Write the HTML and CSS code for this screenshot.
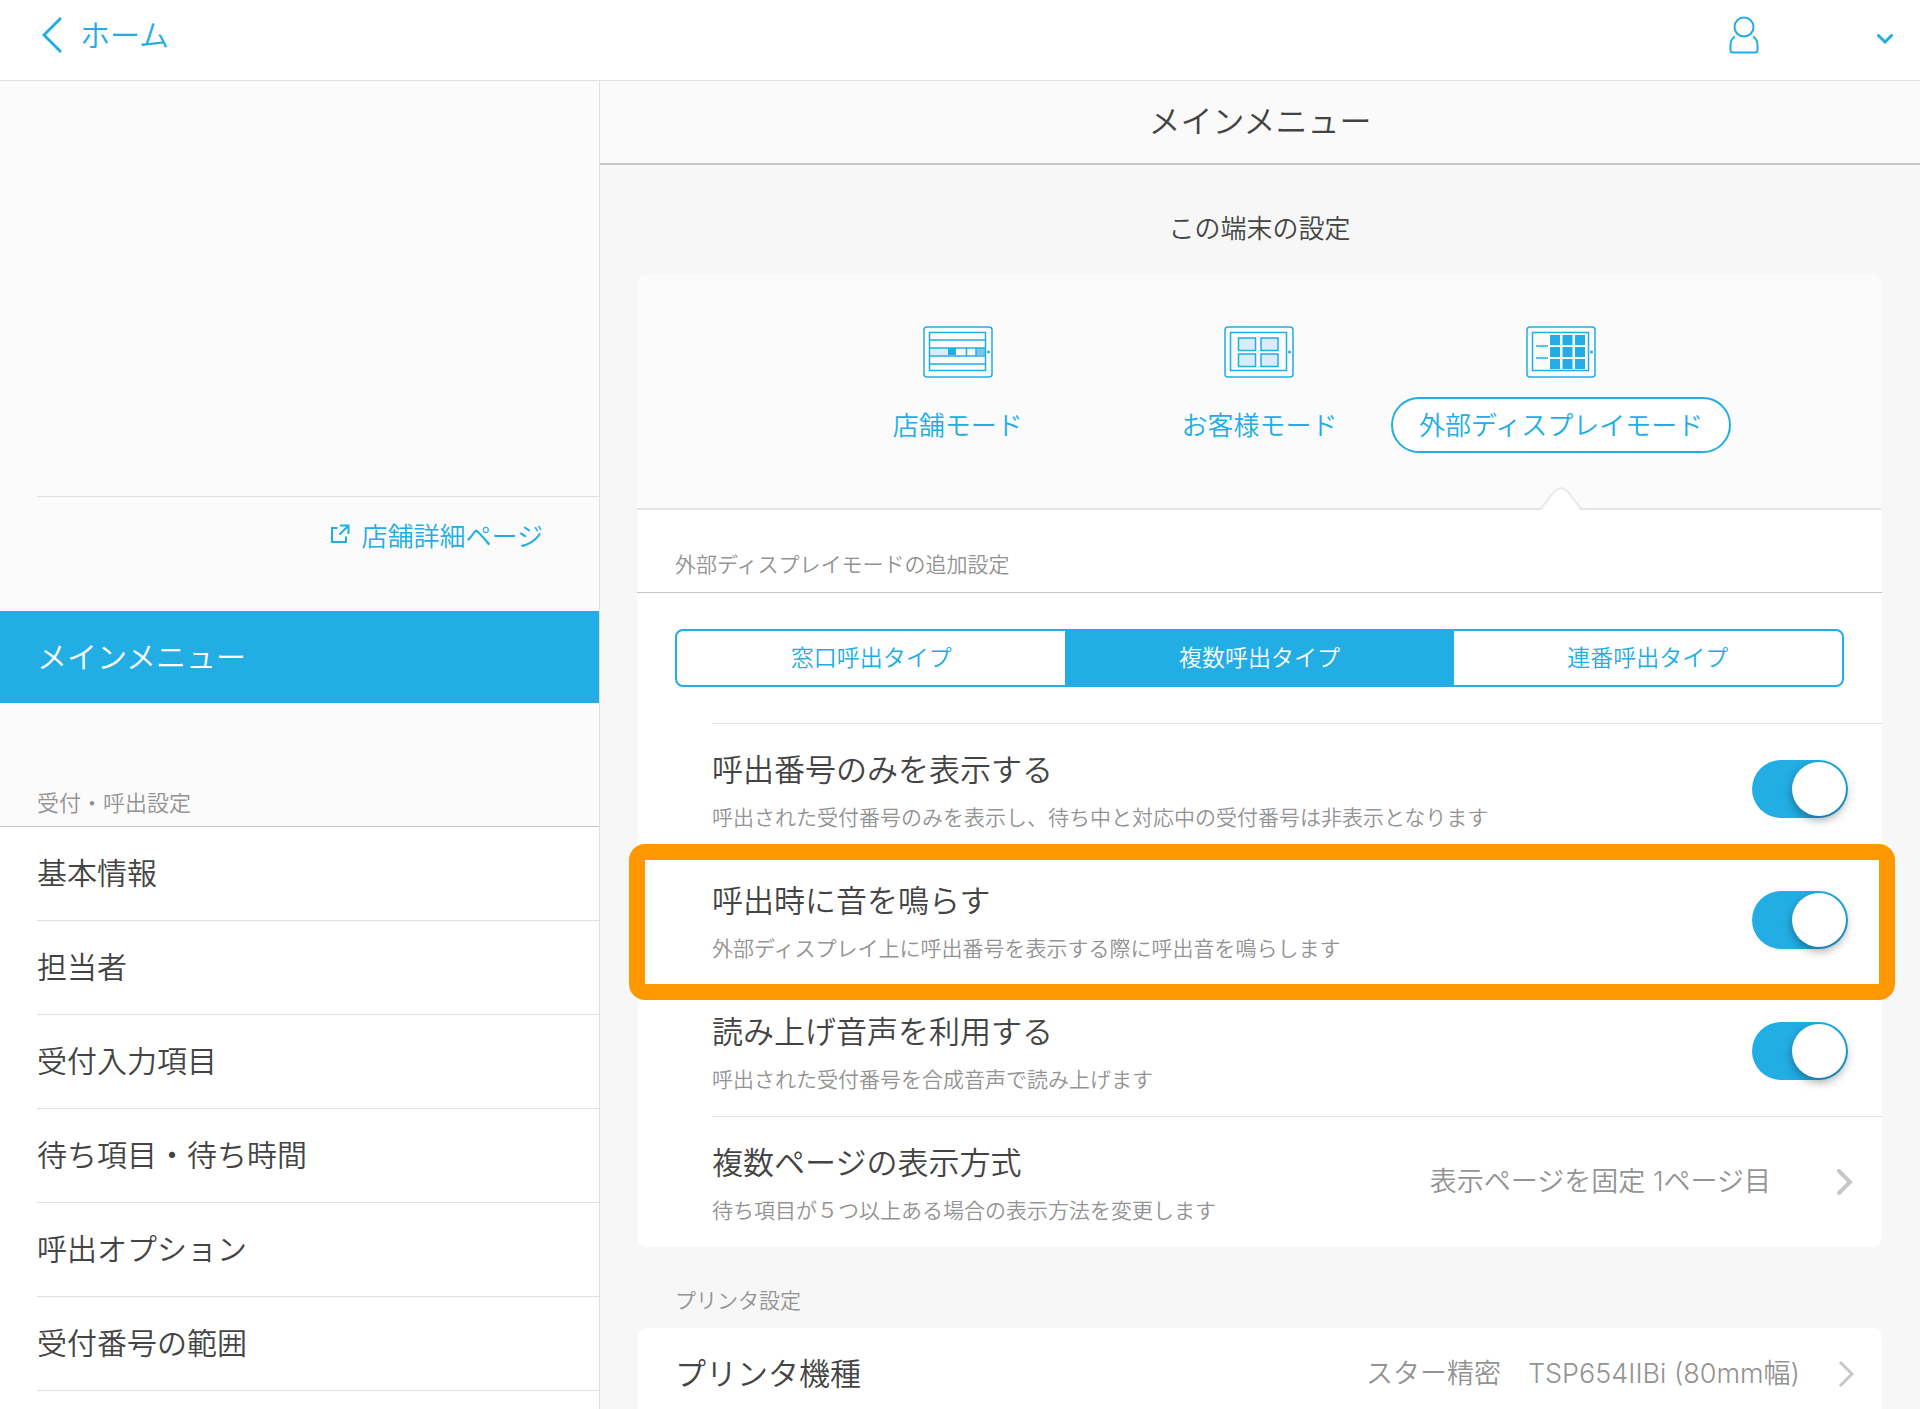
FILE: index.html
```html
<!DOCTYPE html>
<html lang="ja">
<head>
<meta charset="utf-8">
<meta name="viewport" content="width=device-width, initial-scale=1">
<title>メインメニュー</title>
<link rel="stylesheet" href="styles.css">
</head>
<body>
<div class="app">
  <header class="topbar">
    <a class="home-link" href="#home">
      <svg class="back-icon" width="20" height="36" viewBox="0 0 20 36" aria-hidden="true"><path d="M19 1 2 18l17 17"/></svg>
      <span>ホーム</span>
    </a>
    <button class="account" type="button" aria-label="アカウント">
      <svg class="user-icon" width="30" height="38" viewBox="0 0 30 38" aria-hidden="true"><circle cx="15" cy="11" r="9.500"/><path d="M6 20.500C3 22.500 1.500 26 1.500 29v5.500a2 2 0 0 0 2 2h23a2 2 0 0 0 2-2V29c0-3-1.500-6.500-4.500-8.500"/></svg>
      <svg class="caret-icon" width="16" height="10" viewBox="0 0 16 10" aria-hidden="true"><path d="m1.500 1.500 6.500 6.500 6.500-6.500"/></svg>
    </button>
  </header>

  <div class="panes">
    <nav class="sidebar">
      <div class="shop"></div>
      <div class="shop-link-row">
        <a class="shop-link" href="#shop">
          <svg class="external-icon" width="20" height="20" viewBox="0 0 20 20" aria-hidden="true"><path d="M7.500 4H2v14h14v-5.500M10 1.500h8.500V10M18 2 9.500 10.500"/></svg>
          <span>店舗詳細ページ</span>
        </a>
      </div>
      <a class="nav-current" href="#main" aria-current="page">メインメニュー</a>
      <h2 class="nav-heading">受付・呼出設定</h2>
      <ul class="nav-list">
        <li><a href="#basic">基本情報</a></li>
        <li><a href="#staff">担当者</a></li>
        <li><a href="#fields">受付入力項目</a></li>
        <li><a href="#waiting">待ち項目・待ち時間</a></li>
        <li><a href="#options">呼出オプション</a></li>
        <li><a href="#range">受付番号の範囲</a></li>
      </ul>
    </nav>

    <main class="main">
      <h1 class="title">メインメニュー</h1>
      <div class="content">
        <h2 class="section-title">この端末の設定</h2>
        <section class="card">
          <div class="modes">
            <button class="mode" type="button">
              <svg class="tablet" width="70" height="52" viewBox="0 0 70 52" aria-hidden="true">
                <rect class="tint" x="7" y="22" width="18" height="7"/><rect class="solid" x="25" y="22" width="8" height="7"/><rect class="mid" x="53" y="22" width="9" height="7"/>
                <rect x="1" y="1" width="68" height="50" rx="3"/><rect x="6.500" y="6.500" width="56" height="38"/>
                <path d="M6 14h57M6 22h57M6 30h57M6 38h57M43.500 22v8M53 22v8"/><circle class="solid" cx="65.500" cy="26" r="1.500"/>
              </svg>
              <span class="mode-label">店舗モード</span>
            </button>
            <button class="mode" type="button">
              <svg class="tablet" width="70" height="52" viewBox="0 0 70 52" aria-hidden="true">
                <rect x="1" y="1" width="68" height="50" rx="3"/><rect x="6.500" y="6.500" width="56" height="38"/>
                <g class="tiles"><rect x="14.500" y="12" width="17" height="12.500"/><rect x="37" y="12" width="17" height="12.500"/><rect x="14.500" y="28" width="17" height="12.500"/><rect x="37" y="28" width="17" height="12.500"/></g>
                <circle class="solid" cx="65.500" cy="26" r="1.500"/>
              </svg>
              <span class="mode-label">お客様モード</span>
            </button>
            <button class="mode mode-selected" type="button" aria-pressed="true">
              <svg class="tablet" width="70" height="52" viewBox="0 0 70 52" aria-hidden="true">
                <rect x="1" y="1" width="68" height="50" rx="3"/><rect x="6.500" y="6.500" width="56" height="38"/>
                <path d="M10 20h12M10 32h12"/>
                <path class="solid" d="M24 9h10v10H24zM36.500 9h10v10h-10zM49 9h10v10H49zM24 21h10v10H24zM36.500 21h10v10h-10zM49 21h10v10H49zM24 33h10v10H24zM36.500 33h10v10h-10zM49 33h10v10H49z"/>
                <circle class="solid" cx="65.500" cy="26" r="1.500"/>
              </svg>
              <span class="mode-label">外部ディスプレイモード</span>
              <svg class="notch" width="48" height="24" viewBox="0 0 48 24" aria-hidden="true"><path class="notch-fill" d="M0 24C12 24 16 1 24 1s12 23 24 23z"/><path class="notch-line" d="M0 23c2 0 3-1 5-3C12 13 17 1 24 1s12 12 19 19c2 2 3 3 5 3"/></svg>
            </button>
          </div>
          <h3 class="card-heading">外部ディスプレイモードの追加設定</h3>
          <div class="segments" role="radiogroup" aria-label="呼出タイプ">
            <label class="segment"><input type="radio" name="type"><span>窓口呼出タイプ</span></label>
            <label class="segment"><input type="radio" name="type" checked><span>複数呼出タイプ</span></label>
            <label class="segment"><input type="radio" name="type"><span>連番呼出タイプ</span></label>
          </div>
          <div class="settings">
            <label class="setting">
              <span class="setting-text"><span class="setting-name">呼出番号のみを表示する</span><span class="setting-note">呼出された受付番号のみを表示し、待ち中と対応中の受付番号は非表示となります</span></span>
              <input class="switch" type="checkbox" role="switch" checked>
            </label>
            <label class="setting highlighted">
              <span class="setting-text"><span class="setting-name">呼出時に音を鳴らす</span><span class="setting-note">外部ディスプレイ上に呼出番号を表示する際に呼出音を鳴らします</span></span>
              <input class="switch" type="checkbox" role="switch" checked>
            </label>
            <label class="setting">
              <span class="setting-text"><span class="setting-name">読み上げ音声を利用する</span><span class="setting-note">呼出された受付番号を合成音声で読み上げます</span></span>
              <input class="switch" type="checkbox" role="switch" checked>
            </label>
            <a class="setting" href="#pages">
              <span class="setting-text"><span class="setting-name">複数ページの表示方式</span><span class="setting-note">待ち項目が５つ以上ある場合の表示方法を変更します</span></span>
              <span class="value">表示ページを固定 1ページ目</span>
              <svg class="chevron chevron-bold" width="16" height="26" viewBox="0 0 16 26" aria-hidden="true"><path d="m2 2 11 11L2 24"/></svg>
            </a>
          </div>
        </section>

        <h2 class="group-title">プリンタ設定</h2>
        <section class="card">
          <a class="printer" href="#printer">
            <span class="setting-name">プリンタ機種</span>
            <span class="value">スター精密　TSP654IIBi (80mm幅)</span>
            <svg class="chevron" width="16" height="26" viewBox="0 0 16 26" aria-hidden="true"><path d="m2 1 12 12L2 25"/></svg>
          </a>
        </section>
      </div>
    </main>
  </div>
</div>
</body>
</html>
```

FILE: styles.css
```css
* { box-sizing: border-box; }

:root {
  --blue: #22ade5;
  --line: #e0e0e0;
  --line-dark: #c6c6c6;
  --text: #444;
  --muted: #939393;
}

body {
  margin: 0;
  color: var(--text);
  font-family: Inter, "Noto Sans CJK JP", sans-serif;
  font-weight: 350;
}

a { color: inherit; text-decoration: none; }
button { padding: 0; border: 0; background: none; color: inherit; font: inherit; cursor: pointer; }
h1, h2, h3 { margin: 0; font-weight: inherit; }
svg { display: block; flex: none; fill: none; stroke: var(--blue); }

.app { display: flex; flex-direction: column; height: 100vh; overflow: hidden; }

/* Top bar */
.topbar {
  display: flex;
  flex: none;
  align-items: center;
  justify-content: space-between;
  height: 81px;
  padding: 0 27px 11px 42px;
  border-bottom: 1px solid var(--line);
  background: #fff;
  color: var(--blue);
}
.home-link { display: flex; align-items: center; gap: 18px; font-size: 30px; line-height: 40px; }
.back-icon { stroke-width: 3; }
.account { display: flex; align-items: center; gap: 118px; }
.user-icon { stroke-width: 2; }
.caret-icon { margin-top: 8px; stroke-width: 3; stroke-linecap: round; }

.panes { display: grid; flex: 1; grid-template-columns: 600px minmax(0, 1fr); min-height: 0; }

/* Sidebar */
.sidebar {
  display: flex;
  flex-direction: column;
  overflow-y: auto;
  scrollbar-width: none;
  border-right: 1px solid var(--line);
  background: #fbfbfb;
}
.shop { flex: none; height: 415px; }
.shop-link-row {
  display: flex;
  flex: none;
  justify-content: flex-end;
  height: 115px;
  margin-left: 37px;
  padding: 17px 56px 0 0;
  border-top: 1px solid var(--line);
}
.shop-link { display: flex; align-items: center; gap: 12px; height: 40px; color: var(--blue); font-size: 26px; }
.external-icon { stroke-width: 2; }
.nav-current {
  flex: none;
  padding-left: 37px;
  background: var(--blue);
  color: #fff;
  font-size: 30px;
  line-height: 92px;
}
.nav-heading {
  flex: none;
  height: 124px;
  padding: 84px 0 0 37px;
  border-bottom: 1px solid var(--line-dark);
  color: var(--muted);
  font-size: 22px;
  line-height: 32px;
}
.nav-list { flex: 1; margin: 0; padding: 0 0 0 37px; background: #fff; list-style: none; }
.nav-list a { display: block; border-bottom: 1px solid var(--line); font-size: 30px; line-height: 93px; }

/* Main pane */
.main { display: flex; flex-direction: column; min-height: 0; background: #f7f7f7; }
.title {
  flex: none;
  height: 84px;
  border-bottom: 2px solid var(--line-dark);
  background: #fafafa;
  font-size: 32px;
  line-height: 82px;
  text-align: center;
}
.content { flex: 1; overflow-y: auto; padding: 0 38px 0 37px; scrollbar-width: none; }
.section-title { padding: 44px 0 26px; font-size: 26px; line-height: 40px; text-align: center; }
.card { border-radius: 10px; background: #fff; }

/* Mode picker */
.modes {
  display: grid;
  grid-template-columns: repeat(3, minmax(0, 1fr));
  justify-items: center;
  padding: 51px 170px 55px;
  border-bottom: 2px solid #e6e6e6;
  border-radius: 10px 10px 0 0;
  background: #fbfbfb;
  color: var(--blue);
}
.mode { position: relative; display: flex; flex-direction: column; align-items: center; gap: 19px; }
.mode-label {
  padding: 2px 26px 0;
  border: 2px solid transparent;
  border-radius: 28px;
  font-size: 26px;
  line-height: 50px;
  white-space: nowrap;
}
.mode-selected .mode-label { border-color: var(--blue); background: #fff; }
.tablet { stroke-width: 1.5; }
.tablet .solid { fill: var(--blue); stroke: none; }
.tablet .tint { fill: #d6eef9; stroke: none; }
.tablet .mid { fill: #74c8ec; stroke: none; }
.tablet .tiles { fill: #d6eef9; }
.notch { position: absolute; top: calc(100% + 34px); left: calc(50% - 24px); }
.notch-fill { fill: #fff; stroke: none; }
.notch-line { stroke: #e6e6e6; stroke-width: 1.5; }

.card-heading {
  padding: 39px 38px 11px;
  border-bottom: 1px solid var(--line-dark);
  color: var(--muted);
  font-size: 21px;
  line-height: 32px;
}

/* Segmented control */
.segments {
  display: grid;
  grid-template-columns: repeat(3, 1fr);
  margin: 36px 38px;
  overflow: hidden;
  border: 2px solid var(--blue);
  border-radius: 8px;
}
.segment { color: var(--blue); font-size: 23px; line-height: 54px; text-align: center; cursor: pointer; }
.segment input { position: absolute; opacity: 0; }
.segment span { display: block; }
.segment input:checked + span { background: var(--blue); color: #fff; }

/* Setting rows */
.settings { padding-left: 75px; }
.setting {
  position: relative;
  display: flex;
  align-items: center;
  height: 131px;
  padding-right: 34px;
  border-top: 1px solid var(--line);
}
.setting-text { display: flex; flex: 1; flex-direction: column; gap: 8px; padding-top: 6px; }
.setting-name { flex: 1; font-size: 31px; line-height: 44px; }
.setting-note { color: var(--muted); font-size: 21px; line-height: 36px; }
.highlighted::after {
  position: absolute;
  inset: -11px -13px -15px -83px;
  border: 16px solid #ff9800;
  border-radius: 16px;
  content: "";
  pointer-events: none;
  z-index: 1;
}
.switch {
  flex: none;
  appearance: none;
  width: 96px;
  height: 58px;
  margin: 0;
  padding: 2px;
  border-radius: 29px;
  background: #ddd;
}
.switch::before {
  display: block;
  width: 54px;
  height: 54px;
  border-radius: 50%;
  background: #fff;
  box-shadow: 0 4px 10px rgba(0, 0, 0, 0.35);
  content: "";
}
.switch:checked { background: var(--blue); }
.switch:checked::before { margin-left: auto; }

.value { color: var(--muted); font-size: 27px; line-height: 40px; }
.chevron { stroke: #c7c7c7; stroke-width: 3; }
.chevron-bold { stroke-width: 4; stroke-linecap: round; }
.setting .chevron { margin-left: 66px; margin-right: -5px; }

/* Printer */
.group-title { padding: 38px 38px 11px; color: var(--muted); font-size: 21px; line-height: 32px; }
.printer { display: flex; align-items: center; height: 92px; padding: 0 28px 0 38px; }
.printer .chevron { margin-left: 38px; }
```
